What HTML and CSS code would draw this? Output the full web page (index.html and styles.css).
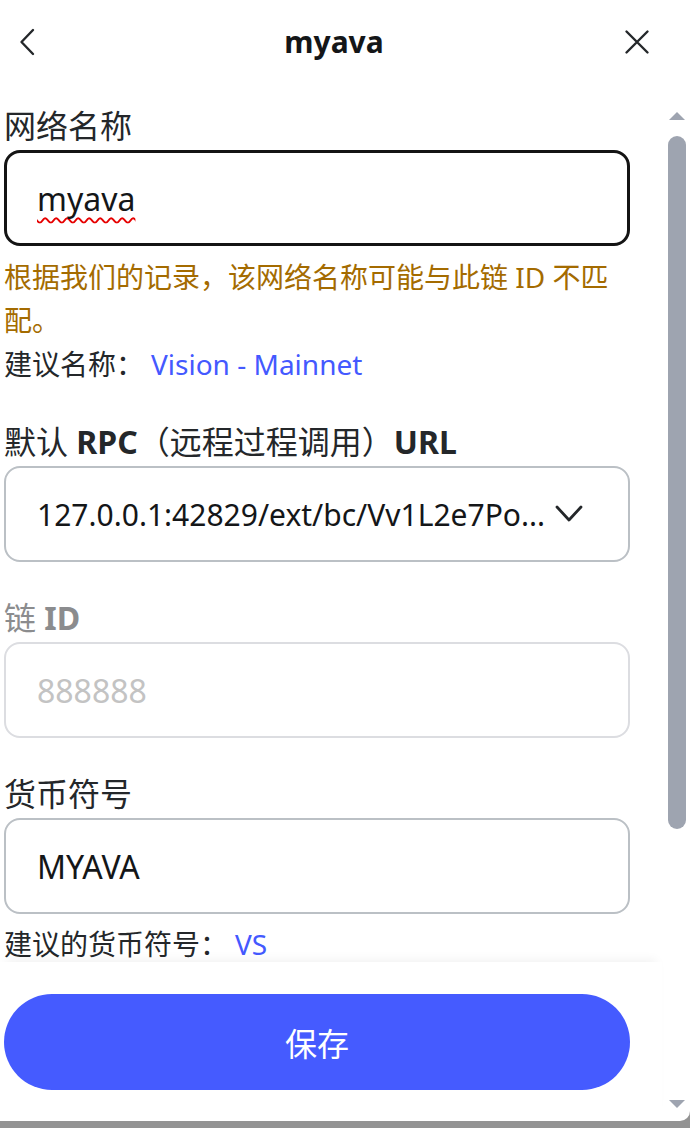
FILE: index.html
```html
<!DOCTYPE html>
<html lang="zh">
<head>
<meta charset="utf-8">
<title>myava</title>
<link rel="stylesheet" href="styles.css">
</head>
<body>
<div class="page">
  <header class="header">
    <button class="icon-btn back" aria-label="返回">
      <svg width="18" height="28" viewBox="0 0 18 28"><path d="M15 2 L3.5 14 L15 26" fill="none" stroke="#24272a" stroke-width="2.4" stroke-linecap="round" stroke-linejoin="round"/></svg>
    </button>
    <h1 class="title">myava</h1>
    <button class="icon-btn close" aria-label="关闭">
      <svg width="26" height="26" viewBox="0 0 26 26"><path d="M2.5 2.5 L23.5 23.5 M23.5 2.5 L2.5 23.5" fill="none" stroke="#24272a" stroke-width="2.4" stroke-linecap="round"/></svg>
    </button>
  </header>
  <div class="body">
    <div class="main">
      <div class="scroll">
        <section class="group group--first">
          <div class="label">网络名称</div>
          <div class="field field--focus"><span class="misspelled">myava</span></div>
          <div class="warning">根据我们的记录，该网络名称可能与此链 ID 不匹配。</div>
          <div class="hint">建议名称：<span class="link">Vision - Mainnet</span></div>
        </section>
        <section class="group">
          <div class="label">默认 <span class="latin">RPC</span>（远程过程调用）<span class="latin">URL</span></div>
          <div class="field field--select">
            <span class="field-text">127.0.0.1:42829/ext/bc/Vv1L2e7Po...</span>
            <svg class="caret" width="30" height="20" viewBox="0 0 30 20"><path d="M3 3 L15 16 L27 3" fill="none" stroke="#24272a" stroke-width="2.8" stroke-linecap="round" stroke-linejoin="round"/></svg>
          </div>
        </section>
        <section class="group">
          <div class="label label--disabled">链 <span class="latin">ID</span></div>
          <div class="field field--disabled"><span class="placeholder">888888</span></div>
        </section>
        <section class="group">
          <div class="label">货币符号</div>
          <div class="field">MYAVA</div>
          <div class="hint hint--below">建议的货币符号：<span class="link">VS</span></div>
        </section>
      </div>
      <footer class="footer">
        <button class="save">保存</button>
      </footer>
    </div>
    <div class="scrollbar" aria-hidden="true">
      <span class="arrow arrow--up"></span>
      <span class="thumb"></span>
      <span class="spacer"></span>
      <span class="arrow arrow--down"></span>
    </div>
  </div>
</div>
</body>
</html>
```

FILE: styles.css
```css
* { box-sizing: border-box; }

html, body {
  margin: 0;
  padding: 0;
}

body {
  background: #939393;
  font-family: "Noto Sans", "Noto Sans CJK SC", sans-serif;
  color: #24272a;
}

.page {
  width: 690px;
  height: 1121px;
  background: #ffffff;
  border-bottom-right-radius: 10px;
  display: flex;
  flex-direction: column;
  overflow: hidden;
}

.header {
  height: 104px;
  flex: none;
  display: grid;
  grid-template-columns: 1fr auto 1fr;
  align-items: center;
  padding: 0 40px 20px 18px;
}

.icon-btn {
  background: none;
  border: 0;
  padding: 0;
  display: flex;
  align-items: center;
}

.back { justify-self: start; }
.close { justify-self: end; }

.title {
  margin: 0;
  font-size: 30px;
  font-weight: 700;
  line-height: 44px;
  color: #141618;
}

.body {
  flex: 1;
  display: flex;
  min-height: 0;
}

.main {
  width: 662px;
  display: flex;
  flex-direction: column;
}

.scroll {
  flex: 1;
  overflow: hidden;
  padding: 0 32px 0 4px;
}

.group {
  margin-top: 34px;
}

.group--first {
  margin-top: 0;
}

.label {
  font-size: 32px;
  line-height: 44px;
  margin-bottom: 2px;
}

.latin { font-weight: 700; }

.label--disabled { color: #8b8c8e; }

.field {
  height: 96px;
  border: 2px solid #bbc0c5;
  border-radius: 16px;
  padding: 0 28px 0 31px;
  display: flex;
  align-items: center;
  font-size: 32px;
  color: #141618;
}

.field--focus {
  border: 3px solid #141414;
  padding-left: 30px;
}

.field--disabled {
  border-color: #dcdde1;
}

.field--select {
  justify-content: space-between;
  padding-right: 44px;
}

.field-text {
  white-space: nowrap;
  font-size: 30px;
}

.caret { flex: none; }

.placeholder { color: #c3c3c3; }

.misspelled {
  text-decoration: underline wavy #e60000;
  text-decoration-thickness: 1.5px;
  text-underline-offset: 6px;
  text-decoration-skip-ink: none;
}

.warning {
  margin-top: 10px;
  font-size: 28px;
  line-height: 43px;
  color: #a46b00;
}

.hint {
  font-size: 28px;
  line-height: 44px;
}

.hint--below { margin-top: 8px; }

.link {
  color: #4459ff;
  margin-left: 7px;
}

.footer {
  position: relative;
  z-index: 1;
  height: 159px;
  flex: none;
  background: #ffffff;
  padding: 32px 32px 0 4px;
  box-shadow: 0 -8px 10px -6px rgba(0, 0, 0, 0.06);
}

.save {
  width: 100%;
  height: 96px;
  border: 0;
  border-radius: 48px;
  background: #455bff;
  color: #ffffff;
  font-family: "Noto Sans CJK SC", sans-serif;
  font-size: 32px;
}

.scrollbar {
  width: 28px;
  display: flex;
  flex-direction: column;
  align-items: center;
  padding: 8px 0 13px 2px;
}

.arrow {
  width: 0;
  height: 0;
  border-left: 8px solid transparent;
  border-right: 8px solid transparent;
}

.arrow--up { border-bottom: 8px solid #9ea4b0; }
.arrow--down { border-top: 8px solid #9ea4b0; }

.thumb {
  margin-top: 16px;
  width: 18px;
  height: 693px;
  border-radius: 9px;
  background: #9ea4b0;
}

.spacer { flex: 1; }
```
